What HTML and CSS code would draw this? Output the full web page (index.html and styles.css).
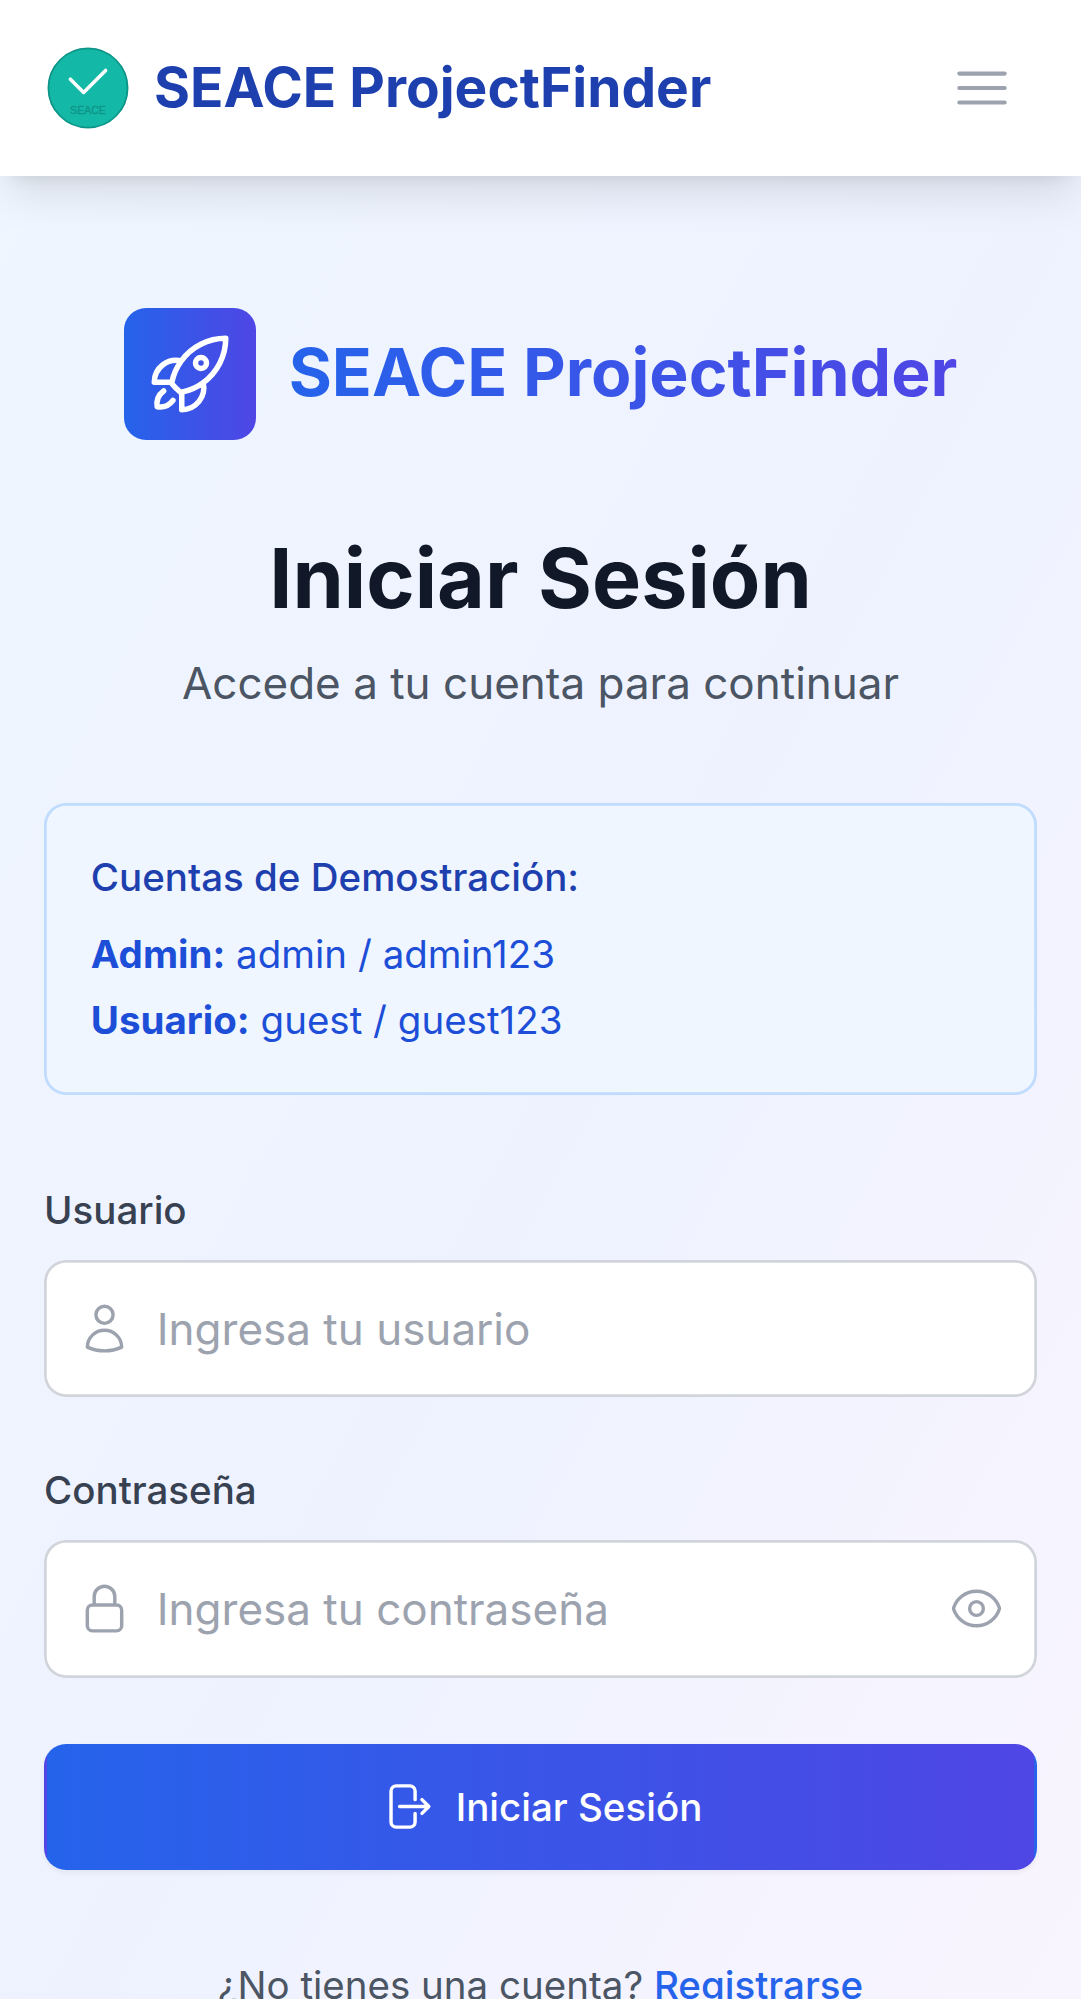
FILE: index.html
```html
<!DOCTYPE html>
<html lang="es">
<head>
<meta charset="utf-8">
<title>SEACE ProjectFinder</title>
<link rel="stylesheet" href="styles.css">
</head>
<body>
<header class="navbar">
  <div class="brand">
    <svg class="brand-logo" viewBox="0 0 200 200">
      <circle cx="100" cy="100" r="90" fill="#14b8a6" stroke="#0d9488" stroke-width="4"/>
      <path d="M60 80 L90 110 L140 60" fill="none" stroke="#fff" stroke-width="8" stroke-linecap="round" stroke-linejoin="round"/>
      <text x="100" y="160" text-anchor="middle" font-family="'Liberation Sans', Arial, sans-serif" font-size="24" fill="#0d9488" stroke="#0d9488" stroke-width="0.7">SEACE</text>
    </svg>
    <span class="brand-name">SEACE ProjectFinder</span>
  </div>
  <button class="menu-button" type="button" aria-label="Abrir menú">
    <svg class="icon icon-menu" viewBox="0 0 24 24"><path d="M3.75 6.75h16.5M3.75 12h16.5m-16.5 5.25h16.5"/></svg>
  </button>
</header>
<main class="page">
  <div class="hero">
    <div class="hero-badge">
      <svg class="icon icon-rocket" viewBox="0 0 24 24"><path d="M15.59 14.37a6 6 0 0 1-5.84 7.38v-4.8m5.84-2.58a14.98 14.98 0 0 0 6.16-12.12A14.98 14.98 0 0 0 9.631 8.41m5.96 5.96a14.926 14.926 0 0 1-5.841 2.58m-.119-8.54a6 6 0 0 0-7.381 5.84h4.8m2.581-5.84a14.927 14.927 0 0 0-2.58 5.84m2.699 2.7c-.103.021-.207.041-.311.06a15.09 15.09 0 0 1-2.448-2.448 14.9 14.9 0 0 1 .06-.312m-2.24 2.39a4.493 4.493 0 0 0-1.757 4.306 4.493 4.493 0 0 0 4.306-1.758M16.5 9a1.5 1.5 0 1 1-3 0 1.5 1.5 0 0 1 3 0Z"/></svg>
    </div>
    <span class="hero-name">SEACE ProjectFinder</span>
  </div>
  <h1 class="title">Iniciar Sesión</h1>
  <p class="subtitle">Accede a tu cuenta para continuar</p>
  <section class="demo">
    <h2 class="demo-title">Cuentas de Demostración:</h2>
    <p><strong>Admin:</strong> admin / admin123</p>
    <p><strong>Usuario:</strong> guest / guest123</p>
  </section>
  <form class="form">
    <div class="field">
      <label class="label" for="user">Usuario</label>
      <div class="control">
        <svg class="icon icon-field" viewBox="0 0 24 24"><path d="M15.75 6a3.75 3.75 0 1 1-7.5 0 3.75 3.75 0 0 1 7.5 0ZM4.501 20.118a7.5 7.5 0 0 1 14.998 0A17.933 17.933 0 0 1 12 21.75c-2.676 0-5.216-.584-7.499-1.632Z"/></svg>
        <input class="input" id="user" type="text" placeholder="Ingresa tu usuario">
      </div>
    </div>
    <div class="field">
      <label class="label" for="password">Contraseña</label>
      <div class="control">
        <svg class="icon icon-field" viewBox="0 0 24 24"><path d="M16.5 10.5V6.75a4.5 4.5 0 1 0-9 0v3.75m-.75 11.25h10.5a2.25 2.25 0 0 0 2.25-2.25v-6.75a2.25 2.25 0 0 0-2.25-2.25H6.75a2.25 2.25 0 0 0-2.25 2.25v6.75a2.25 2.25 0 0 0 2.25 2.25Z"/></svg>
        <input class="input" id="password" type="password" placeholder="Ingresa tu contraseña">
        <svg class="icon icon-field" viewBox="0 0 24 24"><path d="M2.036 12.322a1.012 1.012 0 0 1 0-.639C3.423 7.51 7.36 4.5 12 4.5c4.638 0 8.573 3.007 9.963 7.178.07.207.07.431 0 .639C20.577 16.49 16.64 19.5 12 19.5c-4.638 0-8.573-3.007-9.963-7.178Z"/><path d="M15 12a3 3 0 1 1-6 0 3 3 0 0 1 6 0Z"/></svg>
      </div>
    </div>
    <button class="submit" type="button">
      <svg class="icon icon-submit" viewBox="0 0 24 24"><path d="M15.75 9V5.25A2.25 2.25 0 0 0 13.5 3h-6a2.25 2.25 0 0 0-2.25 2.25v13.5A2.25 2.25 0 0 0 7.5 21h6a2.25 2.25 0 0 0 2.25-2.25V15m3 0 3-3m0 0-3-3m3 3H9"/></svg>
      <span class="submit-text">Iniciar Sesión</span>
    </button>
  </form>
  <p class="signup">¿No tienes una cuenta? <a class="signup-link" href="#">Registrarse</a></p>
</main>
</body>
</html>
```

FILE: styles.css
```css
* {
  box-sizing: border-box;
  margin: 0;
}

html {
  height: 100%;
  overflow: hidden;
}

body {
  height: 100%;
  overflow: hidden;
  font-family: Inter, "Liberation Sans", sans-serif;
  font-size: 44px;
  line-height: 66px;
}

.icon {
  display: block;
  flex: none;
  fill: none;
  stroke: currentColor;
  stroke-width: 1.5;
  stroke-linecap: round;
  stroke-linejoin: round;
}

.navbar {
  position: relative;
  display: flex;
  align-items: center;
  justify-content: space-between;
  height: 176px;
  padding: 0 44px;
  background: #fff;
  box-shadow: 0 27.5px 41.25px -8.25px rgba(0, 0, 0, 0.1), 0 11px 16.5px -11px rgba(0, 0, 0, 0.1);
}

.brand {
  display: flex;
  align-items: center;
  gap: 22px;
}

.brand-logo {
  display: block;
  width: 88px;
  height: 88px;
}

.brand-name {
  padding-bottom: 2px;
  color: #1e40af;
  font-size: 55px;
  font-weight: 700;
  line-height: 77px;
}

.menu-button {
  padding: 22px;
  border: 0;
  background: none;
  color: #9ca3af;
}

.icon-menu {
  width: 66px;
  height: 66px;
}

.page {
  min-height: 1999px;
  padding: 132px 44px;
  background: linear-gradient(to bottom right, #eff6ff, #eef2ff, #faf5ff);
}

.hero {
  display: flex;
  align-items: center;
  justify-content: center;
  gap: 33px;
  margin-bottom: 89px;
}

.hero-badge {
  padding: 22px;
  border-radius: 22px;
  background: linear-gradient(to right, #2563eb, #4f46e5);
  color: #fff;
}

.icon-rocket {
  width: 88px;
  height: 88px;
}

.hero-name {
  padding-bottom: 4px;
  background: linear-gradient(to right, #2563eb, #4f46e5);
  background-clip: text;
  -webkit-background-clip: text;
  color: transparent;
  font-size: 66px;
  font-weight: 700;
  line-height: 88px;
}

.title {
  margin-bottom: 22px;
  color: #111827;
  font-size: 82.5px;
  font-weight: 700;
  line-height: 99px;
  text-align: center;
}

.subtitle {
  margin-bottom: 87px;
  color: #4b5563;
  text-align: center;
}

.demo {
  display: flex;
  flex-direction: column;
  gap: 11px;
  padding: 46.75px;
  border-radius: 22px;
  background: #eff6ff;
  box-shadow: inset 0 0 0 2.75px #bfdbfe;
  color: #1d4ed8;
  font-size: 38.5px;
  line-height: 55px;
}

.demo-title {
  margin-bottom: 11px;
  color: #1e40af;
  font-size: 38.5px;
  font-weight: 500;
}

.form {
  display: flex;
  flex-direction: column;
  gap: 66px;
  margin: 88px 0;
}

.label {
  display: block;
  margin-bottom: 22px;
  color: #374151;
  font-size: 38.5px;
  font-weight: 500;
  line-height: 55px;
}

.control {
  display: flex;
  align-items: center;
  gap: 24.75px;
  height: 137.5px;
  padding: 0 33px;
  border-radius: 22px;
  background: #fff;
  box-shadow: inset 0 0 0 2.75px #d1d5db;
  color: #9ca3af;
}

.icon-field {
  width: 55px;
  height: 55px;
}

.input {
  flex: 1;
  min-width: 0;
  height: 67px;
  padding: 1px 0 0;
  border: 0;
  outline: 0;
  background: none;
  color: #111827;
  font: inherit;
}

.input::placeholder {
  color: #9ca3af;
  opacity: 1;
}

.submit {
  display: flex;
  align-items: center;
  justify-content: center;
  gap: 22px;
  height: 126.5px;
  border: solid transparent;
  border-width: 2px 3px;
  border-radius: 22px;
  background: linear-gradient(to right, #2563eb, #4f46e5);
  box-shadow: 0 2.75px 5.5px rgba(0, 0, 0, 0.05);
  color: #fff;
  font: 500 38.5px/55px Inter, "Liberation Sans", sans-serif;
}

.submit-text {
  padding-top: 1.5px;
}

.icon-submit {
  width: 55px;
  height: 55px;
}

.signup {
  color: #4b5563;
  font-size: 38.5px;
  line-height: 55px;
  text-align: center;
}

.signup-link {
  color: #2563eb;
  font-weight: 500;
  text-decoration: none;
}
```
